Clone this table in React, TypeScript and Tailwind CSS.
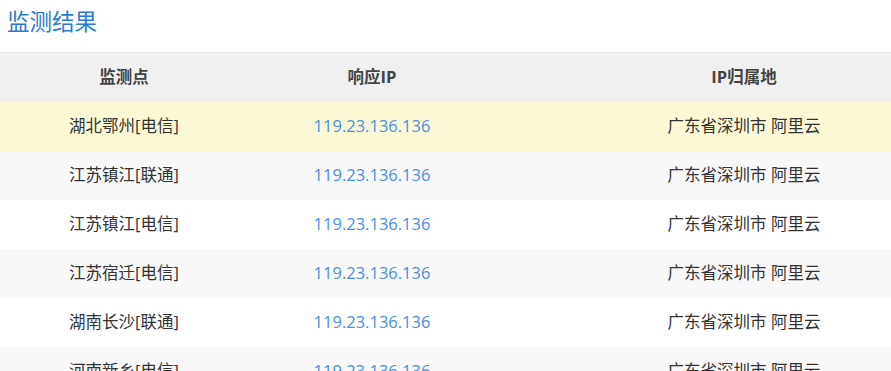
const rows = [
  { site: "湖北鄂州[电信]", ip: "119.23.136.136", loc: "广东省深圳市 阿里云" },
  { site: "江苏镇江[联通]", ip: "119.23.136.136", loc: "广东省深圳市 阿里云" },
  { site: "江苏镇江[电信]", ip: "119.23.136.136", loc: "广东省深圳市 阿里云" },
  { site: "江苏宿迁[电信]", ip: "119.23.136.136", loc: "广东省深圳市 阿里云" },
  { site: "湖南长沙[联通]", ip: "119.23.136.136", loc: "广东省深圳市 阿里云" },
  { site: "河南新乡[电信]", ip: "119.23.136.136", loc: "广东省深圳市 阿里云" },
];

const App = () => {
  return (
    <div
      className="h-[371px] w-[891px] overflow-hidden bg-white text-[#333]"
      style={{ fontFamily: '"Open Sans", "Noto Sans CJK SC", sans-serif' }}
    >
      <h2 className="h-[52px] pl-[7px] pt-[5px] text-[22.5px] leading-[34px] text-[#2b7bd1]">
        监测结果
      </h2>
      <table className="w-[992px] table-fixed border-collapse text-[16.5px]">
        <colgroup>
          <col className="w-[248px]" />
          <col className="w-[248px]" />
          <col className="w-[496px]" />
        </colgroup>
        <thead>
          <tr className="h-[49px] border-t border-[#e5e5e5] bg-[#f0f0f0] font-bold text-[#444]">
            <th className="text-center">监测点</th>
            <th className="text-center">响应IP</th>
            <th className="text-center">IP归属地</th>
          </tr>
        </thead>
        <tbody>
          {rows.map((row, i) => (
            <tr
              key={i}
              className={
                "h-[49px] " +
                (i === 0 ? "bg-[#fbf8d5]" : i % 2 === 1 ? "bg-[#f8f8f8]" : "bg-white")
              }
            >
              <td className="text-center">{row.site}</td>
              <td className="text-center text-[#4a8ee6]">{row.ip}</td>
              <td className="text-center">{row.loc}</td>
            </tr>
          ))}
        </tbody>
      </table>
    </div>
  );
};

export default App;
